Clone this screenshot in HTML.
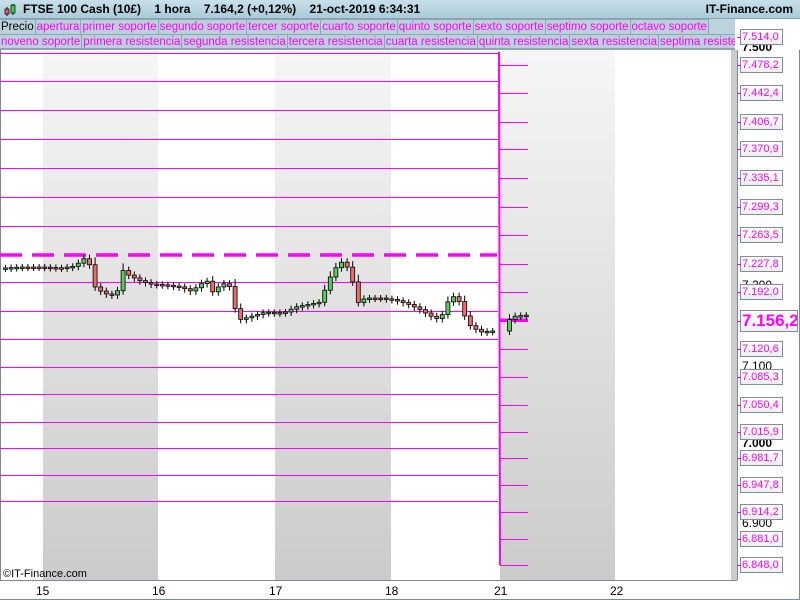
<!DOCTYPE html>
<html><head><meta charset="utf-8"><style>
*{margin:0;padding:0;box-sizing:border-box}
body{width:800px;height:600px;overflow:hidden;background:#fff;font-family:"Liberation Sans",sans-serif;position:relative}
#hdr{position:absolute;left:0;top:0;width:800px;height:19px;background:linear-gradient(#c8e0ea,#a9cbd9);border-bottom:1px solid #8aa3b0;font-size:12px;line-height:19px;font-weight:bold}
.row{position:absolute;left:0;height:16px;display:flex;font-size:11.5px;line-height:15px;background:#bcd3dd}
.row span{border:1px solid #8ea6b2;border-left:none;padding:0 1px;color:#ff00ff;white-space:nowrap;background:#bad1db}
.lbl{position:absolute;left:740px;width:43px;height:16px;border:1px solid #7e8f9b;background:linear-gradient(#fff,#eee);color:#ff00ff;font-size:11px;line-height:14px;padding-left:1px;white-space:nowrap;overflow:hidden}
.blk{position:absolute;left:742px;font-size:12px;color:#000}
.xl{position:absolute;top:584px;font-size:12px}
</style></head><body>
<div id="hdr">
<svg style="position:absolute;left:3px;top:3px" width="14" height="14"><line x1="4" y1="4" x2="4" y2="13" stroke="#000"/><rect x="2" y="6" width="4" height="5" fill="#e56" stroke="#000" stroke-width=".7"/><line x1="10" y1="1" x2="10" y2="12" stroke="#000"/><rect x="8" y="2" width="4" height="8" fill="#4c4" stroke="#000" stroke-width=".7"/></svg>
<span style="position:absolute;left:23px">FTSE 100 Cash (10£)&nbsp;&nbsp;&nbsp; 1 hora&nbsp;&nbsp;&nbsp; 7.164,2 (+0,12%)&nbsp;&nbsp;&nbsp; 21-oct-2019 6:34:31</span>
<span style="position:absolute;right:7px">IT-Finance.com</span>
</div>
<div class="row" style="top:19px;width:735px"><span style="color:#000">Precio</span><span>apertura</span><span>primer soporte</span><span>segundo soporte</span><span>tercer soporte</span><span>cuarto soporte</span><span>quinto soporte</span><span>sexto soporte</span><span>septimo soporte</span><span>octavo soporte</span></div>
<div class="row" style="top:34px;width:735px;overflow:hidden;border-bottom:1px solid #8ea6b2"><span>noveno soporte</span><span>primera resistencia</span><span>segunda resistencia</span><span>tercera resistencia</span><span>cuarta resistencia</span><span>quinta resistencia</span><span>sexta resistencia</span><span>septima resistencia</span></div>
<svg id="ch" style="position:absolute;left:0;top:50px" width="800" height="550">
<defs><linearGradient id="g" x1="0" y1="0" x2="0" y2="1"><stop offset="0" stop-color="#f6f6f6"/><stop offset="1" stop-color="#cbcbcb"/></linearGradient></defs>
<rect x="43" y="0" width="115" height="530" fill="url(#g)"/>
<rect x="275" y="0" width="116" height="530" fill="url(#g)"/>
<rect x="500" y="0" width="115" height="530" fill="url(#g)"/>
<rect x="731" y="0" width="6" height="530" fill="#ccc"/>
<line x1="0.5" y1="0" x2="0.5" y2="530" stroke="#7a8a99"/>
<line x1="0" y1="530.5" x2="737" y2="530.5" stroke="#7a8a99"/>
<line x1="737.5" y1="0" x2="737.5" y2="530" stroke="#7a8a99"/>
<line x1="799.5" y1="0" x2="799.5" y2="550" stroke="#7a8a99"/>
<line x1="0" y1="549.5" x2="800" y2="549.5" stroke="#7a8a99"/>
<g id="lines" stroke="#ff00ff"></g>
<g id="cd"></g>
<text x="3" y="527" font-size="11" font-family="Liberation Sans">©IT-Finance.com</text>
</svg>
<div id="ax"></div>
<div class="xl" style="left:36px">15</div><div class="xl" style="left:152px">16</div><div class="xl" style="left:269px">17</div><div class="xl" style="left:385px">18</div><div class="xl" style="left:494px">21</div><div class="xl" style="left:610px">22</div>
<script>
var L=document.getElementById('lines'),s='';
[53,81,110,139,168,197,226,282,311,339,367,394,422,448,475,501].forEach(function(y){s+='<line x1="0" y1="'+(y-50+.5)+'" x2="498" y2="'+(y-50+.5)+'"/>';});
s+='<line x1="0" y1="205" x2="497" y2="205" stroke-width="3.5" stroke-dasharray="22,10"/>';
s+='<line x1="499" y1="2" x2="500" y2="515" stroke-width="2"/>';
var R=[37,65,93,122,149,178,207,235,264,292,321,349,377,405,432,458,485,512,539,565];
R.forEach(function(y){s+='<line x1="500" y1="'+(y-50+.5)+'" x2="528" y2="'+(y-50+.5)+'"/>';});
s+='<line x1="500" y1="270" x2="528" y2="270" stroke-width="3"/>';
L.innerHTML=s;
var P=[[3,268],[20,267],[40,267],[60,268],[75,266],[82,259],[88,258],[92,285],[100,291],[110,296],[118,290],[122,270],[128,275],[140,281],[150,284],[165,285],[180,287],[190,291],[200,285],[205,278],[212,292],[220,285],[228,282],[232,300],[238,320],[245,318],[255,315],[265,312],[275,313],[285,312],[295,307],[305,305],[320,302],[325,288],[332,272],[340,262],[345,263],[352,281],[357,303],[365,298],[380,298],[395,300],[410,305],[420,310],[430,316],[440,320],[445,305],[452,296],[458,300],[465,318],[470,326],[480,332],[490,331],[497,331],[503,322],[510,319],[515,316],[528,315]];
function py(x){for(var i=1;i<P.length;i++){if(x<=P[i][0]){var a=P[i-1],b=P[i];return a[1]+(b[1]-a[1])*(x-a[0])/(b[0]-a[0]);}}return 315;}
var c='',prev=py(3)-50;
for(var x=5;x<=528;x+=5.6){if(x>496&&x<504)continue;var cl=py(x)-50,op=prev,hi=Math.min(op,cl)-3-Math.abs(op-cl)*0.2,lo=Math.max(op,cl)+4;
c+='<line x1="'+(x+.5)+'" y1="'+hi+'" x2="'+(x+.5)+'" y2="'+lo+'" stroke="#000"/>';
var t=Math.min(op,cl),h=Math.max(Math.abs(op-cl),1.5);
c+='<rect x="'+(x-1.5)+'" y="'+t+'" width="4" height="'+h+'" fill="'+(cl<op?'#55cc55':'#ee6b6b')+'" stroke="#000" stroke-width="0.8"/>';prev=cl;}
document.getElementById('cd').innerHTML=c;
var A='',vals=['7.514,0','7.478,2','7.442,4','7.406,7','7.370,9','7.335,1','7.299,3','7.263,5','7.227,8','7.192,0','7.156,2','7.120,6','7.085,3','7.050,4','7.015,9','6.981,7','6.947,8','6.914,2','6.881,0','6.848,0'];
[[47,'7.500',1],[125,'7.400',0],[285,'7.200',0],[366,'7.100',0],[443,'7.000',1],[523,'6.900',0]].forEach(function(b){A+='<div class="blk" style="top:'+(b[0]-7)+'px;'+(b[2]?'font-weight:bold':'')+'">'+b[1]+'</div>';});
R.forEach(function(y,i){if(i==10)A+='<div class="lbl" style="top:'+(y-11)+'px;width:58px;height:22px;font-size:17px;font-weight:bold;line-height:20px">'+vals[i]+'</div>';else A+='<div class="lbl" style="top:'+(y-8)+'px">'+vals[i]+'</div>';
A+='<div style="position:absolute;left:737px;top:'+y+'px;width:4px;height:1px;background:#f0f"></div>';});
document.getElementById('ax').innerHTML=A;
</script>
</body></html>
